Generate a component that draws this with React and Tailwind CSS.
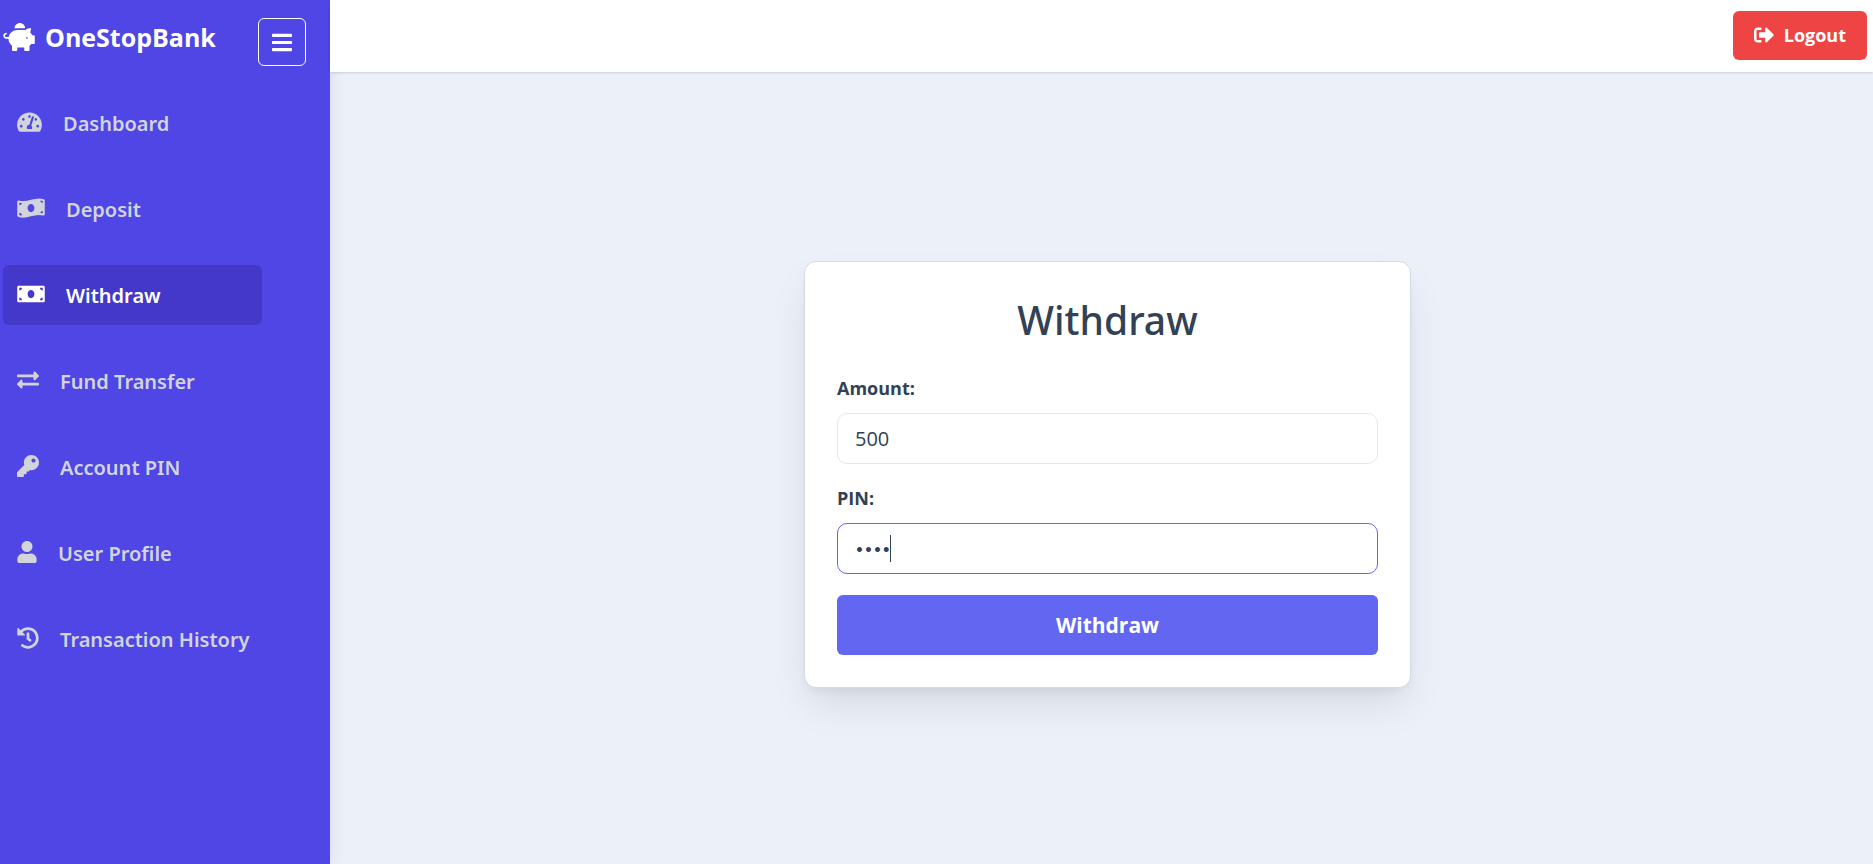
import {
  FaPiggyBank,
  FaBars,
  FaTachometerAlt,
  FaMoneyBillWave,
  FaMoneyBill,
  FaExchangeAlt,
  FaKey,
  FaUser,
  FaHistory,
  FaSignOutAlt,
} from "react-icons/fa";

const links = [
  { label: "Dashboard", icon: FaTachometerAlt, size: "w-[25px]" },
  { label: "Deposit", icon: FaMoneyBillWave, size: "w-7" },
  { label: "Withdraw", icon: FaMoneyBill, size: "w-7", active: true },
  { label: "Fund Transfer", icon: FaExchangeAlt, size: "w-[22px]" },
  { label: "Account PIN", icon: FaKey, size: "w-[22px]" },
  { label: "User Profile", icon: FaUser, size: "w-5" },
  { label: "Transaction History", icon: FaHistory, size: "w-[22px]" },
];

function Sidebar() {
  return (
    <aside className="w-[330px] shrink-0 bg-[#4f46e5] pl-[3px] text-white shadow-[0_0_16px_rgba(0,0,0,0.1)]">
      <div className="flex items-start justify-between pr-6 pt-[18px]">
        <a href="#" className="flex items-center gap-2.5 text-[25px] leading-[38px] font-bold">
          <FaPiggyBank className="h-7 w-8" />
          OneStopBank
        </a>
        <button
          type="button"
          aria-label="Toggle menu"
          className="flex size-12 items-center justify-center rounded-md border border-white"
        >
          <FaBars className="h-[23px] w-5" />
        </button>
      </div>
      <nav className="mt-[27px] flex flex-col gap-[26px] pr-[68px]">
        {links.map(({ label, icon: Icon, size, active }) => (
          <a
            key={label}
            href="#"
            className={
              "flex h-15 items-center gap-[21px] rounded-md px-3.5 pt-0.5 font-['Noto_Sans',sans-serif] text-[20px] font-semibold whitespace-nowrap " +
              (active ? "bg-[#4338ca] text-white" : "text-[#d1d5db]")
            }
          >
            <Icon className={"mb-1 h-[22px] shrink-0 " + size} />
            {label}
          </a>
        ))}
      </nav>
    </aside>
  );
}

function Field({ id, label, textStyle, children, ...props }) {
  return (
    <div className="flex flex-col gap-3">
      <label htmlFor={id} className="text-[18px] leading-[26px] font-bold">
        {label}
      </label>
      <div className="relative">
        <input
          id={id}
          className={
            "block h-[51px] w-full rounded-[10px] border border-gray-200 px-[17px] outline-none focus:border-[#6366f1] " +
            textStyle
          }
          {...props}
        />
        {children}
      </div>
    </div>
  );
}

export default function App() {
  return (
    <div className="flex min-h-screen bg-[#ebf0f9] font-['Open_Sans','Noto_Sans',sans-serif]">
      <Sidebar />
      <div className="flex grow flex-col">
        <header className="z-10 flex h-[72px] items-center justify-end bg-white px-1.5 shadow">
          <button
            type="button"
            className="mb-0.5 flex h-[49px] items-center gap-2.5 rounded-md bg-[#ef4444] px-[21px] text-[18px] font-bold text-white"
          >
            <FaSignOutAlt className="size-5" />
            Logout
          </button>
        </header>
        <main className="flex grow items-center justify-center pt-3 pl-3">
          <form
            onSubmit={(e) => e.preventDefault()}
            className="w-full max-w-[607px] rounded-xl border border-[#d3dae4] bg-white p-8 pt-[31px] text-[#334155] shadow-[0_20px_40px_-6px_rgba(0,0,0,0.1),0_6px_12px_-4px_rgba(0,0,0,0.06)]"
          >
            <h1 className="text-center font-['Noto_Sans',sans-serif] text-[39px] leading-[54px] font-medium">
              Withdraw
            </h1>
            <div className="mt-7 flex flex-col gap-[21px]">
              <Field
                id="amount"
                label="Amount:"
                type="text"
                inputMode="numeric"
                defaultValue="500"
                textStyle="text-[20px]"
              />
              <Field
                id="pin"
                label="PIN:"
                type="password"
                defaultValue="1234"
                autoFocus
                textStyle="pt-1 font-['DejaVu_Sans',sans-serif] text-[14px] font-bold caret-transparent"
              >
                <span className="absolute top-3 left-[53px] h-[27px] w-px bg-[#334155]" />
              </Field>
              <button
                type="submit"
                className="h-15 w-full rounded-md bg-[#6366f1] pt-0.5 text-[21px] font-bold text-white"
              >
                Withdraw
              </button>
            </div>
          </form>
        </main>
      </div>
    </div>
  );
}
